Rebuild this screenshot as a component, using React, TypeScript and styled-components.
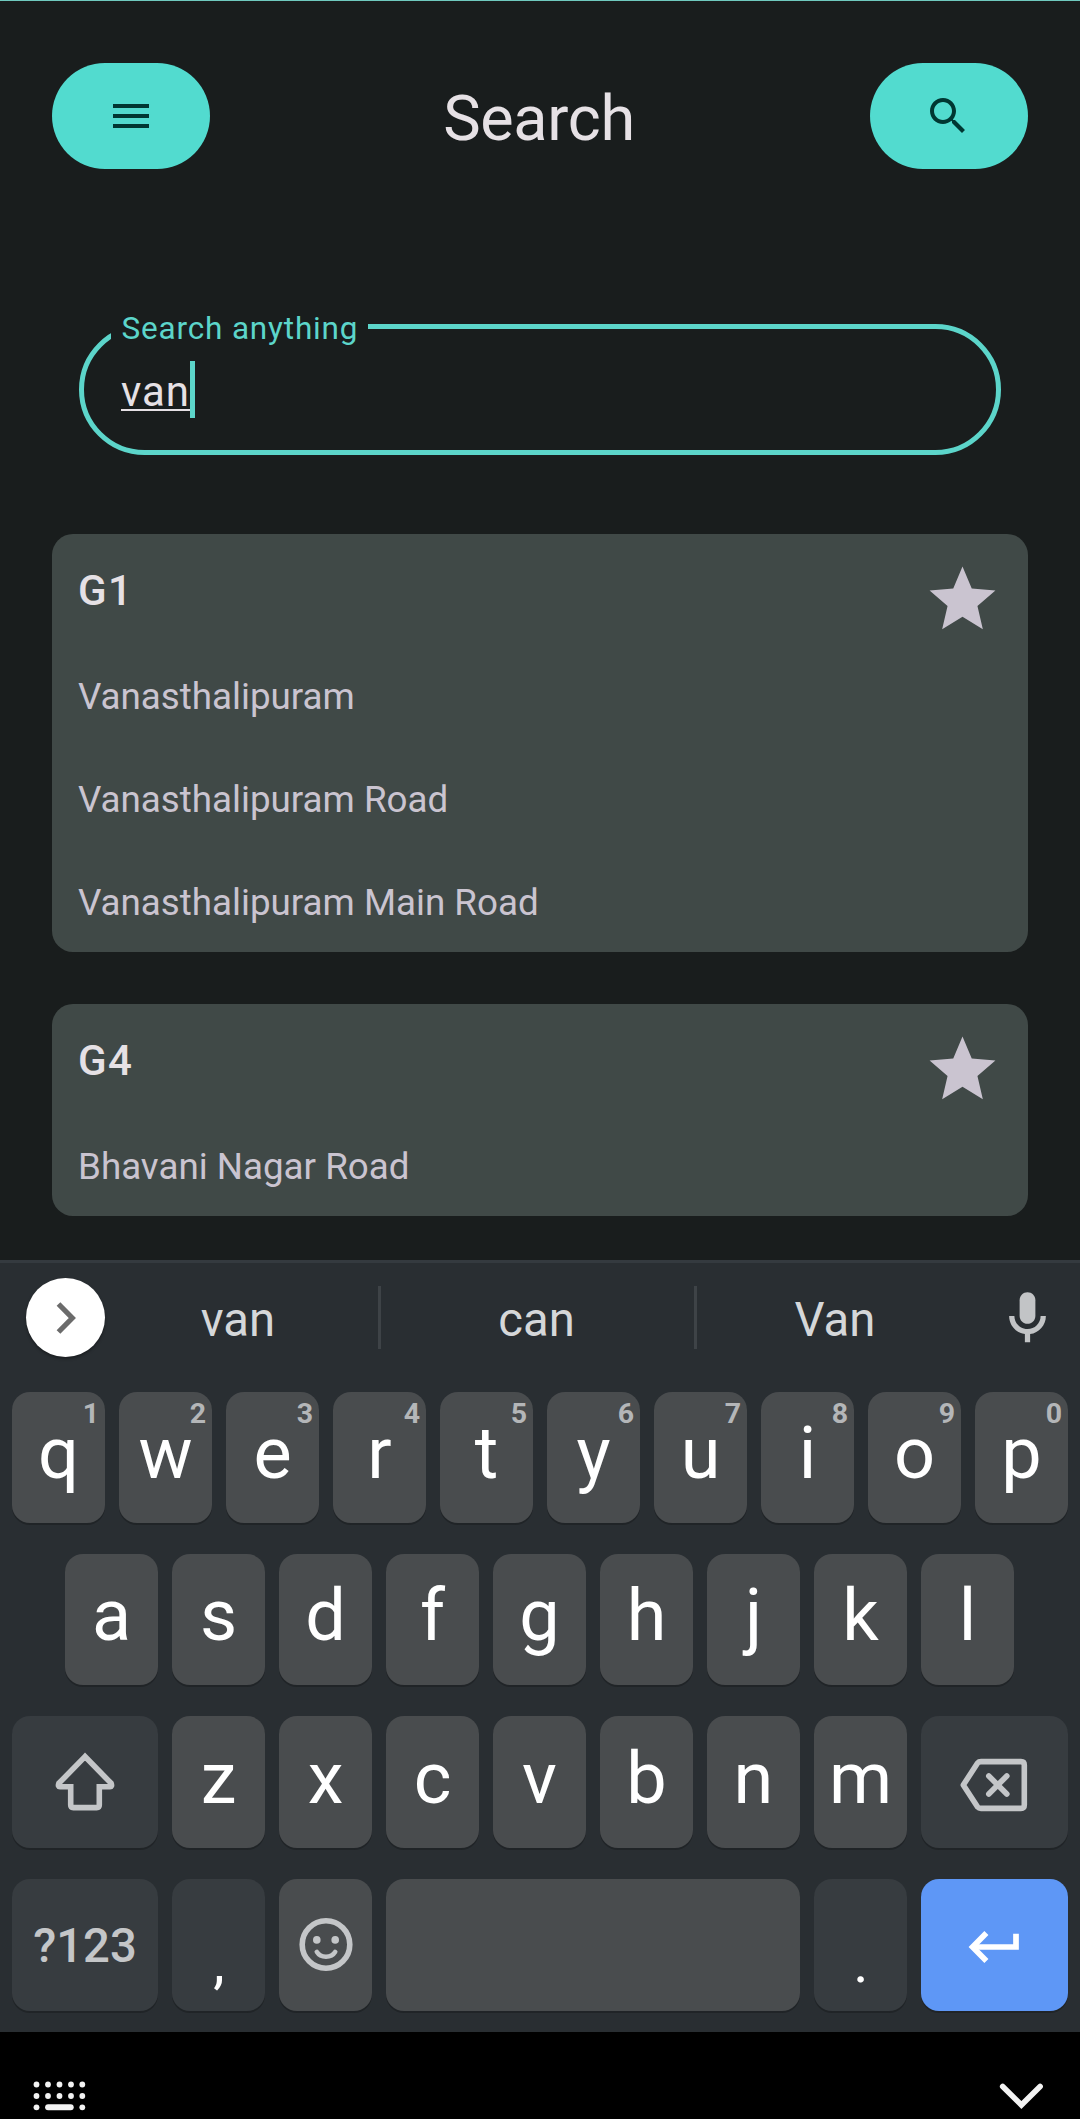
import React from 'react';
import styled, { createGlobalStyle } from 'styled-components';

const color = {
  background: '#191d1d',
  primary: '#52dbcf',
  fieldLine: '#5cd5ca',
  onPrimary: '#003732',
  text: '#e6e1e5',
  textMuted: '#cac4d0',
  card: '#404947',
  keyboard: '#292e32',
  key: '#494c4e',
  keyDim: '#373c40',
  keyIcon: '#c4c6c8',
  enter: '#5e97f6',
};

const GlobalStyle = createGlobalStyle`
  * { box-sizing: border-box; }
  body { margin: 0; background: #000; }
`;

const Screen = styled.main`
  display: flex;
  flex-direction: column;
  width: 1080px;
  height: 2119px;
  overflow: hidden;
  background: #000;
  color: ${color.text};
  font-family: Roboto, sans-serif;
`;

const Content = styled.section`
  display: flex;
  flex-direction: column;
  height: 1260px;
  flex: none;
  padding: 62px 52px 0;
  border-top: 1px solid #6fc9bf;
  background: ${color.background};
`;

const Header = styled.header`
  display: flex;
  align-items: center;
  justify-content: space-between;
  height: 106px;
`;

const PillButton = styled.button`
  display: flex;
  align-items: center;
  justify-content: center;
  width: 158px;
  height: 106px;
  padding: 0 1px 1px 0;
  border: 0;
  border-radius: 53px;
  background: ${color.primary};
  color: ${color.onPrimary};
`;

const Title = styled.h1`
  margin: 0;
  padding: 5px 2px 0 0;
  font-size: 63px;
  font-weight: 400;
  line-height: 74px;
  letter-spacing: -0.3px;
`;

const Field = styled.div`
  position: relative;
  display: flex;
  align-items: flex-start;
  height: 131px;
  margin: 155px 27px 0;
  padding: 32px 37px 0;
  border: 5px solid ${color.fieldLine};
  border-radius: 66px;
`;

const FieldLabel = styled.label`
  position: absolute;
  top: -20px;
  left: 27px;
  width: 257px;
  height: 40px;
  padding-left: 10.5px;
  background: ${color.background};
  color: ${color.fieldLine};
  font-size: 31.5px;
  line-height: 40px;
  letter-spacing: 0.83px;
  white-space: nowrap;
`;

const FieldValue = styled.span`
  height: 50px;
  border-bottom: 2.5px solid ${color.text};
  font-size: 42px;
  line-height: 61px;
  letter-spacing: 0.9px;
`;

const Caret = styled.span`
  width: 5px;
  height: 57px;
  background: ${color.fieldLine};
`;

const Results = styled.div`
  display: flex;
  flex-direction: column;
  gap: 52px;
  margin-top: 79px;
`;

const Card = styled.article`
  padding: 26px 26px 24px 26px;
  border-radius: 21px;
  background: ${color.card};
`;

const CardHead = styled.div`
  display: flex;
  justify-content: space-between;
  height: 78px;
`;

const RouteName = styled.h2`
  margin: 0;
  font-size: 42px;
  font-weight: 500;
  line-height: 62px;
  letter-spacing: 1.3px;
`;

const StopList = styled.ul`
  display: flex;
  flex-direction: column;
  gap: 53px;
  margin: 0;
  padding: 34px 0 0;
  list-style: none;
`;

const Stop = styled.li`
  color: ${color.textMuted};
  font-size: 36.75px;
  line-height: 50px;
  white-space: nowrap;
`;

const Keyboard = styled.section`
  display: flex;
  flex-direction: column;
  flex: none;
  height: 772px;
  border-top: 3px solid #343a3f;
  background: ${color.keyboard};
`;

const Suggestions = styled.div`
  display: flex;
  align-items: center;
  flex: none;
  height: 109px;
  padding: 0 21px 0 26px;
`;

const ExpandButton = styled.button`
  display: flex;
  align-items: center;
  justify-content: center;
  flex: none;
  width: 79px;
  height: 79px;
  padding: 0;
  border: 0;
  border-radius: 50%;
  background: #fff;
  box-shadow: 0 2px 3px rgba(0, 0, 0, 0.35);
`;

const Suggestion = styled.span<{ $width: number; $shift?: number }>`
  width: ${(p) => p.$width}px;
  padding: 5px ${(p) => p.$shift ?? 0}px 0 0;
  color: #d5d7d9;
  font-size: 47.25px;
  line-height: 56px;
  text-align: center;
`;

const Divider = styled.span`
  width: 3px;
  height: 63px;
  background: #3e4347;
`;

const MicButton = styled.button`
  display: flex;
  margin-left: auto;
  padding: 2px 0 0;
  border: 0;
  background: none;
  color: #c2c4c6;
`;

const Keys = styled.div`
  display: flex;
  flex-direction: column;
  gap: 31px;
  padding-top: 20px;
`;

const KeyRow = styled.div<{ $indent?: boolean; $height?: number }>`
  display: flex;
  gap: 14px;
  height: ${(p) => p.$height ?? 131}px;
  padding: ${(p) => (p.$indent ? '0 66px 0 65px' : '0 12px')};
`;

const Key = styled.button<{ $width?: number; $tone?: string }>`
  position: relative;
  display: flex;
  align-items: center;
  justify-content: center;
  flex: ${(p) => (p.$width ? `0 0 ${p.$width}px` : '1 1 0')};
  min-width: 0;
  padding: 0;
  border: 0;
  border-radius: 18px;
  background: ${(p) => p.$tone ?? color.key};
  box-shadow: 0 2px 0 #202427;
  color: ${color.keyIcon};
  font-family: inherit;
`;

const Letter = styled.span`
  padding-bottom: 7px;
  color: #fff;
  font-size: 72px;
  line-height: 84px;
`;

const Hint = styled.span`
  position: absolute;
  top: 5px;
  right: 6px;
  color: #b4b6b8;
  font-size: 28.5px;
  font-weight: 700;
  line-height: 34px;
`;

const ModeLabel = styled.span`
  padding-top: 2px;
  font-size: 47.25px;
  font-weight: 500;
  line-height: 56px;
`;

const Punctuation = styled.span`
  padding: 33px 0 0 1px;
  color: #fff;
  font-size: 58px;
  line-height: 64px;
`;

const NavBar = styled.footer`
  display: flex;
  justify-content: space-between;
  flex: none;
  height: 87px;
  padding: 48px 36px 0 32px;
  background: #000;
`;

const MenuIcon = () => (
  <svg width="48" height="48" viewBox="0 0 24 24" fill="currentColor">
    <path d="M3 18h18v-2H3v2zm0-5h18v-2H3v2zm0-7v2h18V6H3z" />
  </svg>
);

const SearchIcon = () => (
  <svg width="48" height="48" viewBox="0 0 24 24" fill="currentColor">
    <path d="M15.5 14h-.79l-.28-.27C15.41 12.59 16 11.11 16 9.5 16 5.91 13.09 3 9.5 3S3 5.91 3 9.5 5.91 16 9.5 16c1.61 0 3.09-.59 4.23-1.57l.27.28v.79l5 4.99L20.49 19l-4.99-5zm-6 0C7.01 14 5 11.99 5 9.5S7.01 5 9.5 5 14 7.01 14 9.5 11.99 14 9.5 14z" />
  </svg>
);

const StarIcon = () => (
  <svg width="79" height="79" viewBox="0 0 24 24" fill={color.textMuted}>
    <path d="M12 17.27 18.18 21l-1.64-7.03L22 9.24l-7.19-.61L12 2 9.19 8.63 2 9.24l5.46 4.73L5.82 21z" />
  </svg>
);

const ChevronIcon = () => (
  <svg width="32" height="40" viewBox="0 0 32 40" fill="none" stroke="#6b6b6b" strokeWidth="5.2">
    <path d="M8.5 6 22.3 20 8.5 34" />
  </svg>
);

const MicIcon = () => (
  <svg width="63" height="63" viewBox="0 0 24 24" fill="currentColor">
    <path d="M12 14c1.66 0 3-1.34 3-3V5c0-1.66-1.34-3-3-3S9 3.34 9 5v6c0 1.66 1.34 3 3 3z" />
    <path d="M17 11c0 2.76-2.24 5-5 5s-5-2.24-5-5H5c0 3.53 2.61 6.43 6 6.92V21h2v-3.08c3.39-.49 6-3.39 6-6.92h-2z" />
  </svg>
);

const ShiftIcon = () => (
  <svg width="64" height="64" viewBox="0 0 64 64" fill="none" stroke="currentColor" strokeWidth="5.6">
    <path d="M32 6.6 5.8 33.4Q4.6 36.6 7.2 36.8H17.7V55Q17.7 57.6 20.3 57.6H43.7Q46.3 57.6 46.3 55V36.8H56.8Q59.4 36.6 58.2 33.4Z" />
  </svg>
);

const BackspaceIcon = () => (
  <svg width="72" height="66" viewBox="0 0 72 66" fill="none" stroke="currentColor" strokeWidth="5.6" strokeLinejoin="round">
    <path d="M4.3 36 18.6 14Q19.8 12.6 22 12.6H62Q65.3 12.6 65.3 15.9V56.1Q65.3 59.4 62 59.4H22Q19.8 59.4 18.6 58Z" />
    <path d="m29.8 27 18 18M47.8 27l-18 18" strokeLinecap="round" />
  </svg>
);

const SmileIcon = () => (
  <svg width="56" height="56" viewBox="0 0 56 56" fill="none" stroke="currentColor">
    <circle cx="28" cy="27.5" r="23.8" strokeWidth="5.6" />
    <circle cx="18.8" cy="22.9" r="3.8" fill="currentColor" stroke="none" />
    <circle cx="37.2" cy="22.9" r="3.8" fill="currentColor" stroke="none" />
    <path d="M18.8 34.9C22.6 41.3 33.4 41.3 37.2 34.9" strokeWidth="4.6" strokeLinecap="round" />
  </svg>
);

const EnterIcon = () => (
  <svg width="54" height="38" viewBox="0 0 54 38" fill="none" stroke="#fff" strokeWidth="5.7">
    <path d="M48 7.8V21H5" />
    <path d="M18.4 7 4.6 21 18.4 35" />
  </svg>
);

const SwitchKeyboardIcon = () => (
  <svg width="56" height="34" viewBox="0 0 56 34" fill="#f3f3f3">
    {[4.5, 16].map((y) =>
      [4.5, 16, 27.5, 39, 50.3].map((x) => <circle key={`${x}-${y}`} cx={x} cy={y} r="2.9" />),
    )}
    <circle cx="4.5" cy="27.3" r="2.9" />
    <rect x="13.1" y="24.3" width="28.6" height="6" rx="3" />
    <circle cx="50.3" cy="27.3" r="2.9" />
  </svg>
);

const CollapseIcon = () => (
  <svg width="46" height="34" viewBox="0 0 46 34" fill="none" stroke="#f3f3f3" strokeWidth="5.6" strokeLinecap="round">
    <path d="M4.7 6.4 23.4 25 42.1 6.4" />
  </svg>
);

const routes = [
  { name: 'G1', stops: ['Vanasthalipuram', 'Vanasthalipuram Road', 'Vanasthalipuram Main Road'] },
  { name: 'G4', stops: ['Bhavani Nagar Road'] },
];

const LetterKeys = ({ letters, hints }: { letters: string; hints?: string }) => (
  <>
    {letters.split('').map((letter, i) => (
      <Key key={letter}>
        <Letter>{letter}</Letter>
        {hints && <Hint>{hints[i]}</Hint>}
      </Key>
    ))}
  </>
);

export default function App() {
  return (
    <Screen>
      <GlobalStyle />
      <Content>
        <Header>
          <PillButton aria-label="Menu">
            <MenuIcon />
          </PillButton>
          <Title>Search</Title>
          <PillButton aria-label="Search">
            <SearchIcon />
          </PillButton>
        </Header>
        <Field>
          <FieldLabel>Search anything</FieldLabel>
          <FieldValue>van</FieldValue>
          <Caret />
        </Field>
        <Results>
          {routes.map((route) => (
            <Card key={route.name}>
              <CardHead>
                <RouteName>{route.name}</RouteName>
                <StarIcon />
              </CardHead>
              <StopList>
                {route.stops.map((stop) => (
                  <Stop key={stop}>{stop}</Stop>
                ))}
              </StopList>
            </Card>
          ))}
        </Results>
      </Content>
      <Keyboard>
        <Suggestions>
          <ExpandButton aria-label="Expand">
            <ChevronIcon />
          </ExpandButton>
          <Suggestion $width={273} $shift={7}>van</Suggestion>
          <Divider />
          <Suggestion $width={313} $shift={2}>can</Suggestion>
          <Divider />
          <Suggestion $width={276}>Van</Suggestion>
          <MicButton aria-label="Voice input">
            <MicIcon />
          </MicButton>
        </Suggestions>
        <Keys>
          <KeyRow>
            <LetterKeys letters="qwertyuiop" hints="1234567890" />
          </KeyRow>
          <KeyRow $indent>
            <LetterKeys letters="asdfghjkl" />
          </KeyRow>
          <KeyRow $height={132}>
            <Key $width={146} $tone={color.keyDim} aria-label="Shift">
              <ShiftIcon />
            </Key>
            <LetterKeys letters="zxcvbnm" />
            <Key $width={147} $tone={color.keyDim} aria-label="Backspace">
              <BackspaceIcon />
            </Key>
          </KeyRow>
          <KeyRow $height={132}>
            <Key $width={146} $tone={color.keyDim}>
              <ModeLabel>?123</ModeLabel>
            </Key>
            <Key $width={93} $tone={color.keyDim}>
              <Punctuation>,</Punctuation>
            </Key>
            <Key $width={93} aria-label="Emoji">
              <SmileIcon />
            </Key>
            <Key aria-label="Space" />
            <Key $width={93} $tone={color.keyDim}>
              <Punctuation>.</Punctuation>
            </Key>
            <Key $width={147} $tone={color.enter} aria-label="Enter">
              <EnterIcon />
            </Key>
          </KeyRow>
        </Keys>
      </Keyboard>
      <NavBar>
        <SwitchKeyboardIcon />
        <CollapseIcon />
      </NavBar>
    </Screen>
  );
}
